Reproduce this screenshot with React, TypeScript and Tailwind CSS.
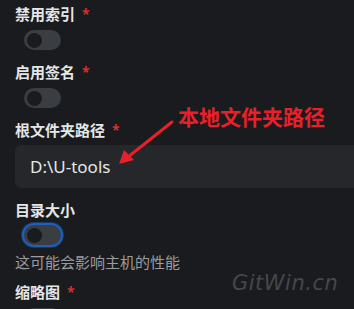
import React from "react";

const font = { fontFamily: '"Noto Sans", "Noto Sans CJK SC", sans-serif' };

function Toggle({ focused = false }: { focused?: boolean }) {
  return (
    <div
      className={
        "ml-[9px] flex h-5 w-[37px] items-center rounded-full bg-[#3a3d42] px-[3px] " +
        (focused ? "outline outline-2 outline-offset-0 outline-[#1f5fb8] ring-[3px] ring-[#153a66]" : "")
      }
    >
      <div className="h-[15px] w-[15px] rounded-full bg-[#1a1b1e]" />
    </div>
  );
}

function Label({ text, required = false }: { text: string; required?: boolean }) {
  return (
    <div className="flex items-center gap-[7px] text-[15px] font-semibold leading-[22px] text-[#e4e6e8]">
      <span>{text}</span>
      {required && <span className="text-[14px] text-[#e03131]">*</span>}
    </div>
  );
}

export default function App() {
  return (
    <div className="relative h-[309px] w-[354px] overflow-hidden bg-[#1a1b1e]" style={font}>
      <div className="flex flex-col px-[15px] pt-[3px]">
        <Label text="禁用索引" required />
        <div className="mt-[5px]">
          <Toggle />
        </div>

        <div className="mt-[11px]">
          <Label text="启用签名" required />
        </div>
        <div className="mt-[5px]">
          <Toggle />
        </div>

        <div className="mt-[11px]">
          <Label text="根文件夹路径" required />
        </div>
        <div className="mt-[4px] flex h-[43px] w-[380px] items-center rounded-md bg-[#25272b] pl-[15px] text-[17px] text-[#e4e6e8]">
          D:\U-tools
        </div>

        <div className="mt-[11px]">
          <Label text="目录大小" />
        </div>
        <div className="mt-[4px]">
          <Toggle focused />
        </div>
        <div className="mt-[6px] text-[15px] leading-[22px] text-[#9a9ca0]">这可能会影响主机的性能</div>

        <div className="mt-[8px]">
          <Label text="缩略图" required />
        </div>
        <div className="mt-[5px]">
          <Toggle />
        </div>
      </div>

      {/* annotation */}
      <div className="absolute left-[178px] top-[104px] text-[21px] font-bold leading-[26px] text-[#e8202a]">
        本地文件夹路径
      </div>
      <svg className="absolute left-0 top-0" width="354" height="309" viewBox="0 0 354 309">
        <line x1="172" y1="122" x2="128" y2="157" stroke="#e8202a" strokeWidth="3" strokeLinecap="round" />
        <polygon points="119,164 124,150 134,160" fill="#e8202a" />
      </svg>

      {/* watermark */}
      <div
        className="absolute left-[232px] top-[270px] text-[21px] italic leading-[26px] tracking-[0.5px] text-[#45474b]"
        style={{ fontFamily: '"DejaVu Sans ExtraLight", "DejaVu Sans", sans-serif', fontWeight: 200 }}
      >
        GitWin.cn
      </div>
    </div>
  );
}
